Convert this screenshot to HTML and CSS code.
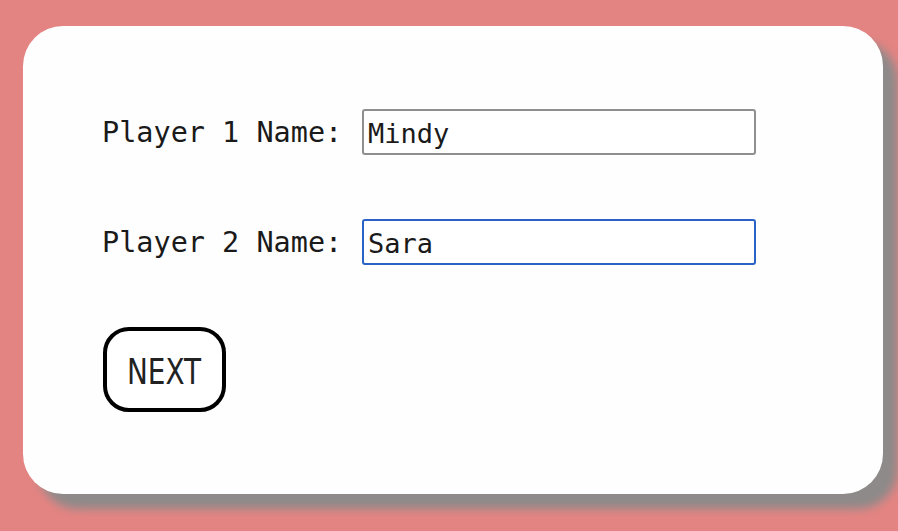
FILE: index.html
```html
<!DOCTYPE html>
<html>
<head>
<meta charset="utf-8">
<link rel="stylesheet" href="styles.css">
</head>
<body>
<div class="card">
  <div class="row">
    <label class="label">Player 1 Name:</label>
    <input class="field" type="text" value="Mindy">
  </div>
  <div class="row">
    <label class="label">Player 2 Name:</label>
    <input class="field focused" type="text" value="Sara">
  </div>
  <button class="next"><span class="next-text">NEXT</span></button>
</div>
</body>
</html>
```
FILE: styles.css
```css
html, body {
  margin: 0;
  padding: 0;
}
body {
  background: #e48482;
  width: 898px;
  height: 531px;
  overflow: hidden;
  padding-top: 26px;
  padding-left: 23px;
  box-sizing: border-box;
}
.card {
  width: 860px;
  height: 468px;
  background: #fefefe;
  border-radius: 40px;
  box-shadow: 15px 15px 10px #8e8a8a;
  box-sizing: border-box;
  padding: 83px 0 0 79px;
  display: flex;
  flex-direction: column;
  align-items: flex-start;
}
.row {
  display: flex;
  align-items: center;
  height: 46px;
  margin-bottom: 64px;
}
.row + .row {
  margin-bottom: 62px;
}
.label {
  width: 260px;
  font-family: "DejaVu Sans Mono", monospace;
  font-size: 28.5px;
  color: #1a1a1a;
  line-height: 1;
  padding-top: 2px;
}
.field {
  width: 394px;
  height: 46px;
  box-sizing: border-box;
  border: 2px solid #8f8f8f;
  border-radius: 3px;
  padding: 2px 4px 0;
  font-family: "DejaVu Sans Mono", monospace;
  font-size: 27px;
  color: #1a1a1a;
  background: #fff;
  outline: none;
  margin: 0;
}
.field.focused {
  border: 2.5px solid #2a62c6;
}
.next {
  width: 123px;
  height: 85px;
  box-sizing: border-box;
  border: 4px solid #000;
  border-radius: 26px;
  background: #fff;
  padding: 4px 0 0 0;
  margin: 0 0 0 1px;
  display: flex;
  align-items: center;
  justify-content: center;
}
.next-text {
  display: inline-block;
  font-family: "DejaVu Sans Condensed", sans-serif;
  font-size: 36px;
  color: #222;
  transform: scaleX(0.86);
}
```
